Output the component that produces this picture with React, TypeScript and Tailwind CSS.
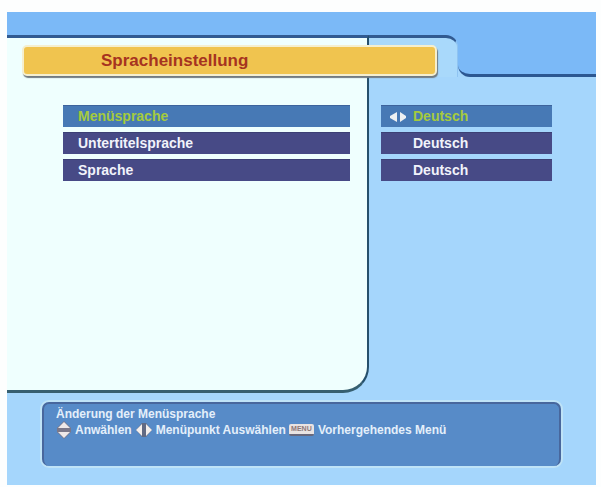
import React from "react";

const settings = [
  { label: "Menüsprache", value: "Deutsch", active: true },
  { label: "Untertitelsprache", value: "Deutsch", active: false },
  { label: "Sprache", value: "Deutsch", active: false },
];

const rowStyle = (active: boolean) =>
  active
    ? "bg-[#4779b5] text-[#a5cb3c] border-t border-[#3d639c]"
    : "bg-[#474a86] text-[#f1f3fb] border-t border-[#3c4075]";

const LeftRight = () => (
  <svg viewBox="0 0 18 12" className="h-[12px] w-[18px] shrink-0" aria-hidden="true">
    <path d="M8 1v10L1 7V5z" fill="#eef0f2" />
    <path d="M11 1v10l6-4V5z" fill="#eef0f2" />
  </svg>
);

const HintLeftRight = () => (
  <svg viewBox="0 0 18 14" className="h-[14px] w-[18px] shrink-0" aria-hidden="true">
    <path d="M7 0h4l6 7-6 7H7L1 7z" fill="#626a83" />
    <path d="M7 1v12L1 7z" fill="#f3eeec" />
    <path d="M11 1v12l6-6z" fill="#f3eeec" />
  </svg>
);

const HintUpDown = () => (
  <svg viewBox="0 0 16 18" className="h-[18px] w-[16px] shrink-0" aria-hidden="true">
    <path d="M8 0l7 7v4l-7 7-7-7V7z" fill="#7b7889" />
    <path d="M8 1l6 6H2z" fill="#eee9e9" />
    <path d="M8 17l6-6H2z" fill="#eee9e9" />
  </svg>
);

// Light tab on the left that steps down into the darker header on the right
const HeaderStep = () => (
  <div className="flex h-[42px]">
    <div className="w-[39%] bg-[#7bb9f7]">
      <div className="h-full rounded-tr-[12px] border-t-3 border-r border-t-[#315a91] border-r-[#8fc4f2] bg-[#a9d9fb]" />
    </div>
    <div className="flex-1 bg-[#a5d6fc]">
      <div className="h-full rounded-bl-[12px] border-b-3 border-[#2c5791] bg-[#7bb9f7]" />
    </div>
  </div>
);

const App = () => {
  return (
    <div className="bg-[#fdfefe] pt-[12px] pr-[5px] pb-[2px] pl-[7px] font-['Liberation_Sans',Arial,sans-serif] font-bold">
      <main className="relative bg-[#a5d6fc]">
        <div className="h-[23px] bg-[#7bb9f7]" />

        <div className="grid grid-cols-[362fr_227fr]">
          <section className="rounded-br-[26px] border-t-3 border-r-2 border-b-3 border-t-[#315a91] border-r-[#26506c] border-b-[#365f70] bg-[#effffe]">
            <ul className="mt-[67px] mr-[17px] mb-[209px] ml-[56px] flex flex-col gap-[5px]">
              {settings.map((item) => (
                <li key={item.label}>
                  <button
                    type="button"
                    className={`flex h-[22px] w-full items-center px-[15px] text-[14px] ${rowStyle(item.active)}`}
                  >
                    {item.label}
                  </button>
                </li>
              ))}
            </ul>
          </section>

          <section>
            <HeaderStep />
            <ul className="mt-[28px] mr-[44px] ml-[12px] flex flex-col gap-[5px]">
              {settings.map((item) => (
                <li key={item.label}>
                  <button
                    type="button"
                    aria-label={`${item.label}: ${item.value}`}
                    className={`flex h-[22px] w-full items-center gap-[6px] pl-[8px] text-[14px] ${rowStyle(item.active)}`}
                  >
                    <span className="flex w-[18px]">{item.active && <LeftRight />}</span>
                    {item.value}
                  </button>
                </li>
              ))}
            </ul>
          </section>
        </div>

        {/* Title bar overlaps both columns */}
        <h1 className="absolute top-[33px] right-[27%] left-[15px] flex h-[31px] items-center rounded-[5px] border-2 border-[#f5efcf] bg-[#f0c44f] pl-[77px] text-[17px] text-[#a63320] shadow-[1px_2px_1px_#727b80]">
          Spracheinstellung
        </h1>

        <div className="pt-[7px] pr-[33px] pb-[17px] pl-[33px]">
          <footer className="h-[68px] rounded-[9px] border-2 border-[#bfe3f7]">
            <div className="h-full rounded-[7px] border-t-2 border-r-2 border-l-2 border-[#48679d] bg-[#578bc8] pt-[3px] pl-[12px] text-[12px] leading-[14px] text-[#e4effa]">
              <p>Änderung der Menüsprache</p>
              <div className="flex h-[18px] items-center whitespace-nowrap">
                <HintUpDown />
                <span className="ml-[3px]">Anwählen</span>
                <span className="ml-[3px] flex">
                  <HintLeftRight />
                </span>
                <span className="ml-[3px]">Menüpunkt Auswählen</span>
                <span className="ml-[3px] flex h-[12px] w-[25px] items-center justify-center rounded-[2px] border-b-2 border-[#68687c] bg-[#e9e3e2] text-[7px] leading-[8px] text-[#8b7778]">
                  MENU
                </span>
                <span className="ml-[4px]">Vorhergehendes Menü</span>
              </div>
            </div>
          </footer>
        </div>
      </main>
    </div>
  );
};

export default App;
